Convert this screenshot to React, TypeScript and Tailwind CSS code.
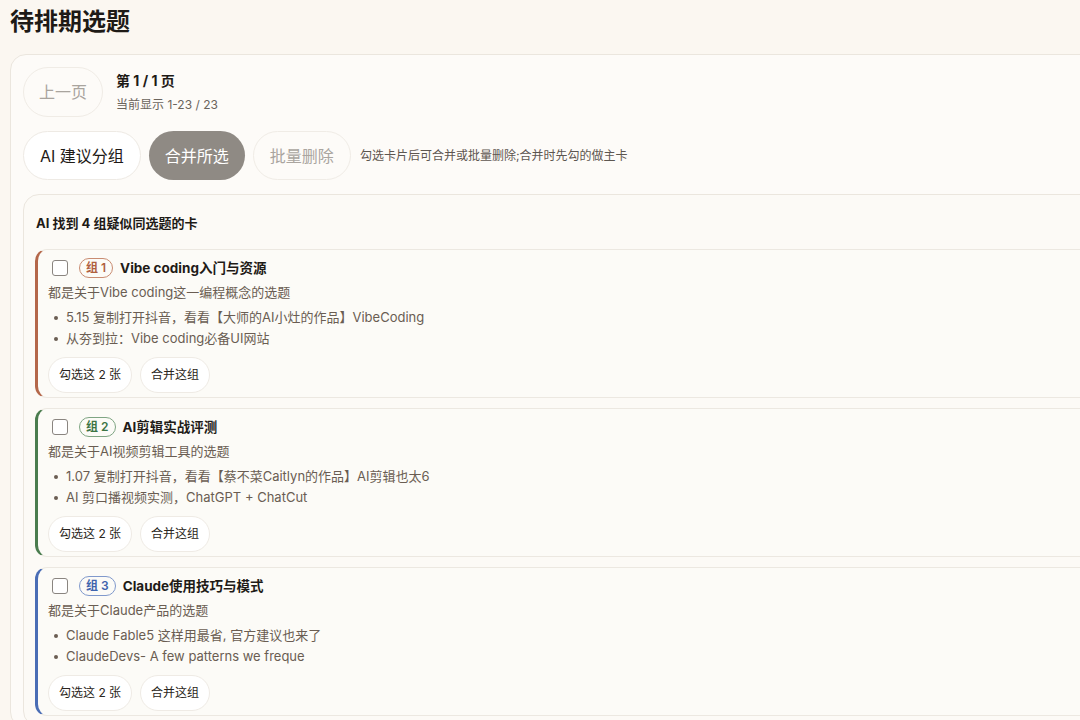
import React from "react";

const groups = [
  {
    n: "1",
    title: "Vibe coding入门与资源",
    desc: "都是关于Vibe coding这一编程概念的选题",
    items: ["5.15 复制打开抖音，看看【大师的AI小灶的作品】VibeCoding", "从夯到拉：Vibe coding必备UI网站"],
    border: "border-l-[#b4674a]",
    badge: "border-[#c98c72] text-[#b0603f]",
  },
  {
    n: "2",
    title: "AI剪辑实战评测",
    desc: "都是关于AI视频剪辑工具的选题",
    items: ["1.07 复制打开抖音，看看【蔡不菜Caitlyn的作品】AI剪辑也太6", "AI 剪口播视频实测，ChatGPT + ChatCut"],
    border: "border-l-[#4a7c4e]",
    badge: "border-[#7fa583] text-[#3d7444]",
  },
  {
    n: "3",
    title: "Claude使用技巧与模式",
    desc: "都是关于Claude产品的选题",
    items: ["Claude Fable5 这样用最省, 官方建议也来了", "ClaudeDevs- A few patterns we freque"],
    border: "border-l-[#4a6db5]",
    badge: "border-[#8099cc] text-[#3f64ad]",
  },
];

function GroupCard({ g }: { g: (typeof groups)[number] }) {
  return (
    <div className={`rounded-[12px] border border-[#ece8e1] border-l-[3px] ${g.border} bg-[#fcfbf7] pl-[10px] pr-3 pt-[6px] pb-[4px]`}>
      <div className="flex items-center h-[24px]">
        <span className="w-[16px] h-[16px] rounded-[3px] border border-[#8a8580] bg-white ml-[4px]"></span>
        <span className={`ml-[11px] h-[20px] px-[6px] rounded-full border ${g.badge} text-[12px] font-semibold flex items-center leading-none`}>
          组<span className="ml-[3px]">{g.n}</span>
        </span>
        <span className="ml-[7px] text-[13.5px] font-bold text-[#1f1b17]">{g.title}</span>
      </div>
      <div className="mt-[1px] text-[13px] leading-[22px] text-[#6a5d52]">{g.desc}</div>
      <ul className="mt-[4px]">
        {g.items.map((t) => (
          <li key={t} className="flex items-center text-[13px] leading-[21px] text-[#6a5d52]">
            <span className="w-[4px] h-[4px] rounded-full bg-[#6a5d52] ml-[6px] mr-[8px]"></span>
            {t}
          </li>
        ))}
      </ul>
      <div className="flex gap-[8px] mt-[8px]">
        <button className="h-[36px] px-[10px] rounded-full border border-[#efebe5] bg-white text-[12px] text-[#2a2520]">勾选这 2 张</button>
        <button className="h-[36px] px-[10px] rounded-full border border-[#efebe5] bg-white text-[12px] text-[#2a2520]">合并这组</button>
      </div>
    </div>
  );
}

export default function App() {
  return (
    <div
      className="w-[1080px] h-[720px] overflow-hidden bg-[#fbf7f1] pl-[10px]"
      style={{ fontFamily: "Inter, 'Noto Sans CJK SC', sans-serif" }}
    >
      <h1 className="pt-[6px] text-[24px] font-bold leading-[32px] text-[#1e1a16]">待排期选题</h1>
      <div className="mt-[16px] w-[1110px] rounded-[16px] border border-[#ebe6de] bg-[#fdfbf8] pl-[12px] pt-[12px]">
        <div className="flex items-center">
          <button className="h-[50px] w-[80px] rounded-full border border-[#f0ece6] bg-[#fdfbf8] text-[16px] text-[#a9a49e]">上一页</button>
          <div className="ml-[13px]">
            <div className="text-[14px] font-bold text-[#1e1a16] leading-[20px]">第 1 / 1 页</div>
            <div className="mt-[6px] text-[12px] text-[#6b645c] leading-[16px]">当前显示 1-23 / 23</div>
          </div>
        </div>
        <div className="flex items-center mt-[14px]">
          <button className="h-[49px] px-[16px] rounded-full border border-[#eeeae4] bg-white text-[16px] text-[#1e1a16]">AI 建议分组</button>
          <button className="ml-[8px] h-[49px] px-[16px] rounded-full bg-[#8f8a84] text-[16px] text-white">合并所选</button>
          <button className="ml-[8px] h-[49px] px-[16px] rounded-full border border-[#f0ece6] bg-[#fdfbf8] text-[16px] text-[#aaa59f]">批量删除</button>
          <span className="ml-[9px] text-[12px] text-[#5d5650]">勾选卡片后可合并或批量删除;合并时先勾的做主卡</span>
        </div>
        <div className="mt-[14px] rounded-[16px] border border-[#ebe6de] bg-[#fcfaf6] pl-[11px] pt-[17px] pb-[10px]">
          <div className="pl-[1px] text-[13px] font-bold text-[#1e1a16] leading-[22px]">AI 找到 4 组疑似同选题的卡</div>
          <div className="mt-[15px] flex flex-col gap-[10px]">
            {groups.map((g) => (
              <GroupCard key={g.n} g={g} />
            ))}
          </div>
        </div>
      </div>
    </div>
  );
}
